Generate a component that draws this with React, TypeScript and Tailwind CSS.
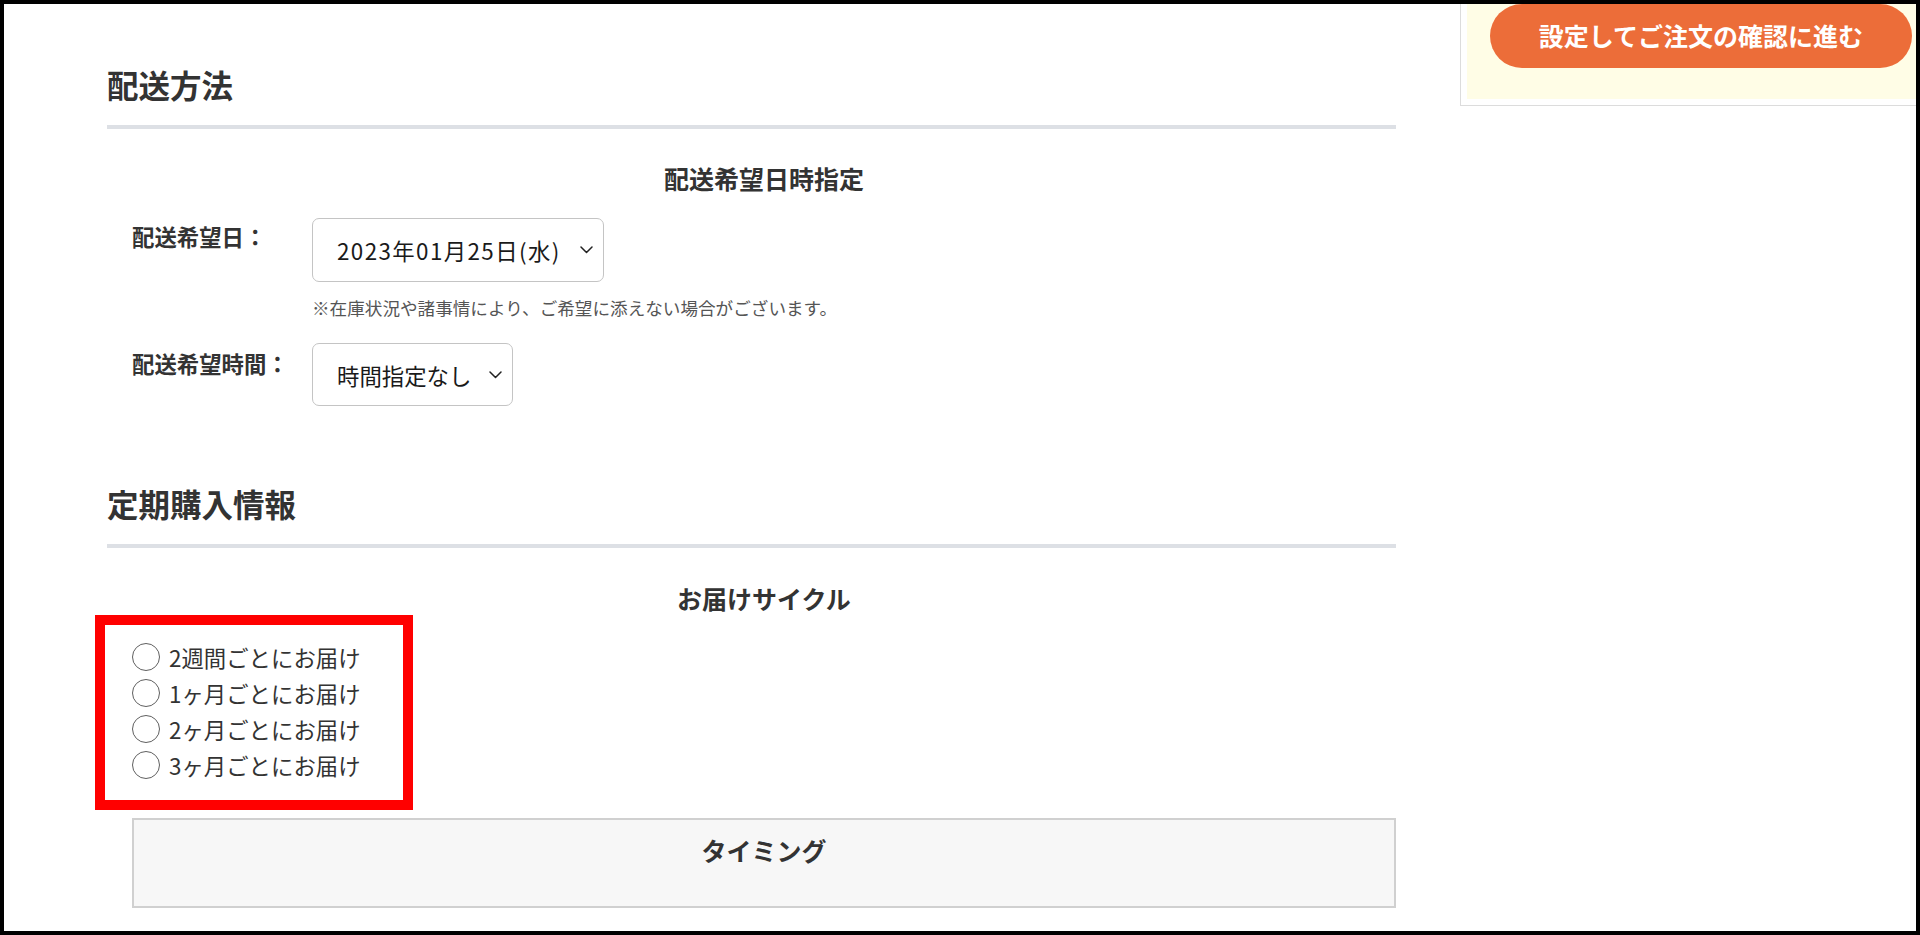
const deliveryCycles = ['2週間ごとにお届け', '1ヶ月ごとにお届け', '2ヶ月ごとにお届け', '3ヶ月ごとにお届け'];

function Chevron() {
  return (
    <svg width="13" height="8" viewBox="0 0 13 8" fill="none">
      <path d="M1 1l5.5 5.5L12 1" stroke="#222" strokeWidth="1.5" strokeLinecap="round" strokeLinejoin="round" />
    </svg>
  );
}

function FakeSelect({ value, width, height, tracking }: { value: string; width: string; height: string; tracking?: string }) {
  return (
    <div
      className={`${width} ${height} flex items-center justify-between pl-[24px] pr-[10px] border border-[#c4c4c4] rounded-[7px] bg-white text-[22.4px] leading-[24px] text-[#1a1a1a]`}
    >
      <span className={tracking}>{value}</span>
      <Chevron />
    </div>
  );
}

export default function App() {
  return (
    <div className="w-[1920px] h-[935px] border-4 border-black bg-white overflow-hidden flex font-['Noto_Sans_CJK_JP','Noto_Sans',sans-serif] text-[#333]">
      {/* メインカラム */}
      <div className="ml-[103px] w-[1289px] shrink-0 pt-[64px]">
        <h2 className="text-[31.5px] leading-[32px] font-bold pb-[25px] border-b-4 border-[#dde0e5]">配送方法</h2>

        <div className="pl-[25px]">
          <h3 className="mt-[37px] text-center text-[25px] leading-[25px] font-bold">配送希望日時指定</h3>

          <div className="mt-[27px] flex items-start">
            <div className="w-[180px] pt-[6px] text-[22.4px] leading-[24px] font-bold">配送希望日：</div>
            <div>
              <FakeSelect value="2023年01月25日(水)" width="w-[292px]" height="h-[64px]" tracking="tracking-[1.4px]" />
              <p className="mt-[17px] text-[17.6px] leading-[17px] text-[#555]">
                ※在庫状況や諸事情により、ご希望に添えない場合がございます。
              </p>
            </div>
          </div>

          <div className="mt-[27px] flex items-start">
            <div className="w-[180px] pt-[8px] text-[22.4px] leading-[24px] font-bold">配送希望時間：</div>
            <FakeSelect value="時間指定なし" width="w-[201px]" height="h-[63px]" />
          </div>
        </div>

        <h2 className="mt-[81px] text-[31.5px] leading-[32px] font-bold pb-[25px] border-b-4 border-[#dde0e5]">定期購入情報</h2>

        <div className="pl-[25px]">
          <h3 className="mt-[38px] text-center text-[25px] leading-[25px] font-bold">お届けサイクル</h3>

          {/* お届けサイクル選択 */}
          <div className="mt-[4px] ml-[-37px] w-[318px] border-[10px] border-[#ff0000] pt-[14px] pb-[17px] pl-[27px]">
            {deliveryCycles.map((label) => (
              <label key={label} className="h-[36px] flex items-center gap-[9px]">
                <input
                  type="radio"
                  name="cycle"
                  className="appearance-none w-[28px] h-[28px] rounded-full border-[1.5px] border-[#5f5f5f] bg-white m-0"
                />
                <span className="text-[22.4px] leading-[24px] text-[#333]">{label}</span>
              </label>
            ))}
          </div>

          <div className="mt-[8px] h-[90px] border-2 border-[#d0d0d0] bg-[#f7f7f7] pt-[18px] text-center">
            <h3 className="text-[25px] leading-[25px] font-bold">タイミング</h3>
          </div>
        </div>
      </div>

      {/* サイドパネル */}
      <div className="ml-[64px] w-[470px] shrink-0 self-start border-l border-r border-b border-[#dcdcdc] px-[6px] pb-[6px]">
        <div className="bg-[#fffde6] pl-[23px] pb-[31px]">
          <button
            type="button"
            className="w-[422px] h-[64px] rounded-full bg-[#ec6d39] text-white text-[25px] font-bold"
          >
            設定してご注文の確認に進む
          </button>
        </div>
      </div>
    </div>
  );
}
